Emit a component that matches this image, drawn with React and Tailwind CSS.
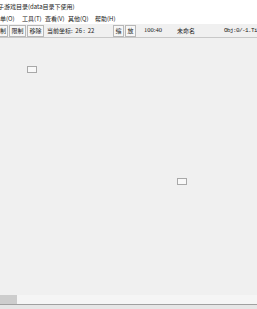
import React from 'react';

const font = { fontFamily: '"Noto Sans CJK SC", "Liberation Sans", sans-serif' };

const menus = [
  { label: '单(O)', w: 'w-[22px]' },
  { label: '工具(T)', w: 'w-[23px]' },
  { label: '查看(V)', w: 'w-[23px]' },
  { label: '其他(Q)', w: 'w-[27px]' },
  { label: '帮助(H)', w: 'w-[30px]' },
];

function ToolButton({ children, className = '' }) {
  return (
    <div className={`h-[12px] shrink-0 flex items-center justify-center border border-[#b8b8b8] bg-[#f7f7f7] ${className}`}>
      {children}
    </div>
  );
}

export default function App() {
  return (
    <div className="w-[257px] h-[309px] overflow-hidden bg-[#f0f0f0] flex flex-col text-[6px] leading-none text-[#222]" style={font}>
      {/* title */}
      <div className="h-[13px] bg-white flex items-center whitespace-nowrap">
        <span className="-ml-[2px]">子游戏目录(data目录下使用)</span>
      </div>

      {/* menu */}
      <div className="h-[11px] bg-white flex items-center whitespace-nowrap">
        {menus.map((m) => (
          <span key={m.label} className={`shrink-0 ${m.w}`}>{m.label}</span>
        ))}
      </div>

      {/* toolbar */}
      <div className="h-[14px] flex items-center gap-[1px] whitespace-nowrap border-b border-[#c8c8c8] bg-[#f0f0f0]">
        <ToolButton className="w-[9px] -ml-[1px] border-l-0">制</ToolButton>
        <ToolButton className="w-[17px]">限制</ToolButton>
        <ToolButton className="w-[17px]">移除</ToolButton>
        <span className="shrink-0 ml-[2px] w-[65px]">当前坐标:&nbsp; 26 :&nbsp; 22</span>
        <ToolButton className="w-[11px]">缩</ToolButton>
        <ToolButton className="w-[11px]">放</ToolButton>
        <span className="shrink-0 ml-[7px] w-[32px] text-[6.5px]" style={{ fontFamily: '"Liberation Serif", serif' }}>100:40</span>
        <span className="shrink-0 w-[46px]">未命名</span>
        <span className="shrink-0 tracking-[-0.6px]" style={{ fontFamily: '"Liberation Mono", monospace' }}>Obj:0/-1.Til</span>
      </div>

      {/* canvas */}
      <div className="relative flex-1 bg-[#f0f0f0]">
        <div className="absolute left-[27px] top-[28px] w-[10px] h-[7px] border border-[#a8a8a8] bg-[#f8f8f8]" />
        <div className="absolute left-[177px] top-[140px] w-[10px] h-[7px] border border-[#a8a8a8] bg-[#f8f8f8]" />
      </div>

      {/* scrollbar */}
      <div className="h-[9px] bg-[#f5f5f5] flex">
        <div className="w-[17px] h-full bg-[#cdcdcd]" />
      </div>
      <div className="h-[5px] border-t border-[#a0a0a0] bg-[#e6e6e6]" />
    </div>
  );
}
